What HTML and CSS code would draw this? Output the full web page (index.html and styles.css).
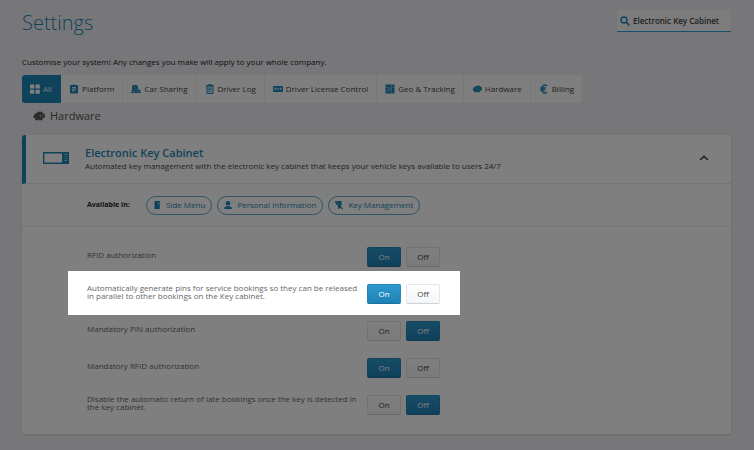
FILE: index.html
```html
<!DOCTYPE html>
<html lang="en">
<head>
<meta charset="utf-8">
<title>Settings</title>
<link rel="stylesheet" href="styles.css">
</head>
<body>
<main class="page">
  <header class="top">
    <h1>Settings</h1>
    <label class="search">
      <svg viewBox="0 0 10 10" aria-hidden="true"><circle cx="4" cy="4" r="3" fill="none" stroke="currentColor" stroke-width="1.4"/><path d="M6.2 6.2L9.3 9.3" stroke="currentColor" stroke-width="1.7"/></svg>
      <input type="text" aria-label="Search settings" value="Electronic Key Cabinet">
    </label>
  </header>
  <p class="intro">Customise your system! Any changes you make will apply to your whole company.</p>
  <nav class="tabs">
    <a href="#all" class="tab active"><svg viewBox="0 0 10 10"><path d="M0 .5h4.3v4H0zM5.5.5h4.3v4H5.5zM0 5.7h4.3v4H0zM5.5 5.7h4.3v4H5.5z" fill="currentColor"/></svg>All</a>
    <a href="#platform" class="tab"><svg viewBox="0 0 10 10"><path d="M1.8 1h2Q5-.6 6.200 1h2q.8 0 .8.8v7q0 .8-.8.8H1.800Q1 9.600 1 8.800v-7Q1 1 1.800 1z" fill="currentColor"/><path d="M3 3.600h4M3 5.200h4M3 6.800h2.700" stroke="#fff" stroke-width=".9"/></svg>Platform</a>
    <a href="#sharing" class="tab"><svg viewBox="0 0 10 10"><path d="M1 5.500V2.500L2 1h3.500L7 2.500V5l1.500.5L9.700 7v2H0V7.500h1z" fill="currentColor"/><path d="M2.500 3h1.500M4.500 5.500h2M1 7.600h3M6 7.600h2" stroke="#cfe5f0" stroke-width=".7"/></svg>Car Sharing</a>
    <a href="#log" class="tab"><svg viewBox="0 0 10 10"><path d="M2 1.500h6v8H2z" fill="#d5eaf5" stroke="currentColor" stroke-width="1"/><path d="M3.300.3h3.400v2H3.300zM1.500 1h7v1.500h-7z" fill="currentColor"/><path d="M3.300 4.200h3.400M3.300 5.700h3.400M3.300 7.200h2" stroke="currentColor" stroke-width=".8"/></svg>Driver Log</a>
    <a href="#license" class="tab"><svg viewBox="0 0 10 10"><rect y="2" width="10" height="6" rx=".8" fill="currentColor"/><path d="M1.300 3.800h2v2h-2zM4.300 3.800h1.500v2H4.300zM6.800 3.800h1.800v2H6.800z" fill="#cfe5f0"/></svg>Driver License Control</a>
    <a href="#geo" class="tab"><svg viewBox="0 0 10 10"><path d="M.5.5h9v9h-9z" fill="currentColor"/><path d="M6.300 0v10M.5 3.500H4L3 5h3M1 7h3V5M6.300 3H10" fill="none" stroke="#cfe5f0" stroke-width=".5"/></svg>Geo &amp; Tracking</a>
    <a href="#hardware" class="tab"><svg viewBox="0 0 12 10"><path d="M1 5.500l1.500-3L4.500 2 5.500 1h3.800l.7 1 1.700 1v3.500l-1.700.5-1 2H6.500L6 8l-.7 1H2.500V7L1 7z" fill="currentColor"/><path d="M7.300 3v3.800" fill="none" stroke="#cfe5f0" stroke-width=".6"/></svg>Hardware</a>
    <a href="#billing" class="tab"><svg viewBox="0 0 10 10"><path d="M8.200 1.700Q3.200-.5 3 5q.2 5.500 5.200 3.300M1.200 3.900h5.600M1.200 6h5" fill="none" stroke="currentColor" stroke-width="1.500"/></svg>Billing</a>
  </nav>
  <h2 class="section"><svg viewBox="0 0 12 10"><path d="M.5 5.500l1.500-3L4 2 5 .700h4l.8 1.200 2 1.100v3.500l-1.800.5-1 2.300H6.300L5.800 8l-.7 1.300H2.200V7L.5 7z" fill="currentColor"/><path d="M7.300 3v4M9.300 3.300v3" fill="none" stroke="#ccc" stroke-width=".6"/></svg>Hardware</h2>

  <article class="card">
    <header class="card-head">
      <svg class="cabinet" viewBox="0 0 26 12"><path d="M.7.700h24.600v10.600H.7z" fill="none" stroke="currentColor" stroke-width="1.400"/><path d="M19 .5h6.500v11H19z" fill="currentColor"/><path d="M21.500 2.500h2.500M21.500 4.500h1M23 4.500h1M21.500 6.500h1M23 6.500h1M21.500 8.500h2.500" stroke="#b5d6e6" stroke-width=".9"/></svg>
      <div class="card-title">
        <h3>Electronic Key Cabinet</h3>
        <p>Automated key management with the electronic key cabinet that keeps your vehicle keys available to users 24/7</p>
      </div>
      <button class="collapse" aria-label="Collapse"><svg viewBox="0 0 10 6"><path d="M1 5L5 1.300 9 5" fill="none" stroke="currentColor" stroke-width="1.700"/></svg></button>
    </header>
    <div class="available">
      <strong>Available in:</strong>
      <a class="pill" href="#side"><svg viewBox="0 0 10 10"><path d="M2.500 1h5.300v8H2.500z" fill="currentColor"/><path d="M5.800 2.500h1v2h-1z" fill="#cfe5f0"/></svg>Side Menu</a>
      <a class="pill" href="#personal"><svg viewBox="0 0 10 10"><circle cx="5" cy="3.300" r="2.300" fill="currentColor"/><path d="M1.300 9V7.500Q2 6 5 6t3.700 1.500V9z" fill="currentColor"/></svg>Personal Information</a>
      <a class="pill" href="#keys"><svg viewBox="0 0 10 10"><path d="M1 1h6.500v4.500L6.500 6l2.500 2.500-.8 1L6 7.500 5.500 9 4 8.500V6L1.500 3.500z" fill="currentColor"/><path d="M2.500 1.500L5 5" stroke="#cfe5f0" stroke-width=".5"/></svg>Key Management</a>
    </div>
    <div class="options">
      <div class="option" role="group" aria-labelledby="o1"><span id="o1">RFID authorization</span><button class="toggle on">On</button><button class="toggle">Off</button></div>
      <div class="option spotlight" role="group" aria-labelledby="o2"><span id="o2">Automatically generate pins for service bookings so they can be released in parallel to other bookings on the Key cabinet.</span><button class="toggle on">On</button><button class="toggle">Off</button></div>
      <div class="option" role="group" aria-labelledby="o3"><span id="o3">Mandatory PIN authorization</span><button class="toggle">On</button><button class="toggle on">Off</button></div>
      <div class="option" role="group" aria-labelledby="o4"><span id="o4">Mandatory RFID authorization</span><button class="toggle on">On</button><button class="toggle">Off</button></div>
      <div class="option" role="group" aria-labelledby="o5"><span id="o5">Disable the automatic return of late bookings once the key is detected in the key cabinet.</span><button class="toggle">On</button><button class="toggle on">Off</button></div>
    </div>
  </article>
</main>
</body>
</html>
```

FILE: styles.css
```css
* { box-sizing: border-box; }
body {
  margin: 0;
  background: #eeeef2;
  color: #444;
  font: 8px/10px "Open Sans", "Liberation Sans", sans-serif;
}
h1, h2, h3, p { margin: 0; font-weight: 400; }
a { color: inherit; text-decoration: none; }
svg { display: block; flex: none; }
input, button { font: inherit; color: inherit; border: 0; background: none; padding: 0; }

.page { min-height: 100vh; padding: 8px 23px 16px 22px; }
.top { display: flex; justify-content: space-between; align-items: flex-start; }
h1 { font-size: 20px; line-height: 30px; font-weight: 300; color: #1e86b8; }
.search {
  display: flex;
  align-items: center;
  gap: 3px;
  width: 114px;
  height: 22px;
  margin-top: 2px;
  padding: 0 3px;
  background: #f8f8fa;
  border-bottom: 1px solid #2ba3dc;
}
.search svg { width: 10px; height: 10px; color: #1e86b8; }
.search input { flex: 1; min-width: 0; outline: 0; font-weight: 600; }
.intro { margin-top: 19px; color: #222; }

.tabs {
  display: flex;
  width: fit-content;
  margin-top: 8px;
  background: #fcfcfd;
  border-radius: 3px;
  overflow: hidden;
}
.tab {
  display: flex;
  align-items: center;
  gap: 3px;
  height: 28px;
  padding: 0 8px;
  border-right: 1px solid #f0f0f3;
}
.tab:last-child { border: 0; }
.tab svg { width: 10px; height: 10px; color: #1e86b8; }
.tab.active { background: #1e86b8; border-color: #1e86b8; color: #e4f2fa; }
.tab.active svg { color: #fff; }

.section {
  display: flex;
  align-items: center;
  gap: 5px;
  margin: 5px 0 12px 11px;
  font-size: 11px;
  line-height: 15px;
  color: #555;
}
.section svg { width: 12px; height: 10px; }

.card {
  background: #fff;
  border-radius: 3px;
  box-shadow: 0 1px 2px #ccccd2;
}
.card-head {
  display: flex;
  align-items: center;
  height: 49px;
  padding: 0 22px 2px 17px;
  border-left: 4px solid #1e86b8;
  border-bottom: 1px solid #e8e8ec;
  border-radius: 3px 0 0 0;
}
.cabinet { width: 26px; height: 12px; color: #1e86b8; }
.card-title { flex: 1; margin-left: 16px; }
h3 { font-size: 11px; line-height: 15px; font-weight: 600; color: #1e86b8; }
.card-title p { line-height: 12px; }
.collapse svg { width: 10px; height: 6px; color: #444c5c; }

.available {
  display: flex;
  align-items: center;
  gap: 5px;
  height: 43px;
  padding-left: 65px;
  border-bottom: 1px solid #eeeef2;
}
.available strong { width: 54px; font-size: 7px; color: #222; }
.pill {
  display: flex;
  align-items: center;
  gap: 4px;
  height: 19px;
  padding: 0 6px 0 5px;
  border: 1px solid #5aa9d0;
  border-radius: 10px;
  color: #1e86b8;
}
.pill svg { width: 10px; height: 10px; }

.options { padding: 7px 46px 15px; }
.option {
  display: grid;
  grid-template-columns: 275px 34px 34px;
  align-items: center;
  width: 392px;
  height: 44px;
  margin-bottom: -7px;
  padding: 2px 0 0 19px;
  column-gap: 5px;
}
.option span { line-height: 8px; color: #666; padding-bottom: 4px; }
.spotlight {
  position: relative;
  z-index: 1;
  background: #fff;
  box-shadow: 0 0 0 2000px rgba(0, 0, 0, .5);
}
.toggle {
  height: 20px;
  color: #444;
  background: linear-gradient(#fff, #f3f5f7);
  border: 1px solid #e2e5e9;
  border-bottom-color: #cfd3d8;
  border-radius: 2px;
}
.toggle.on {
  color: #fff;
  background: linear-gradient(#2d98cd, #1f82b5);
  border-color: #2387ba;
  border-bottom-color: #1a719f;
}
```
